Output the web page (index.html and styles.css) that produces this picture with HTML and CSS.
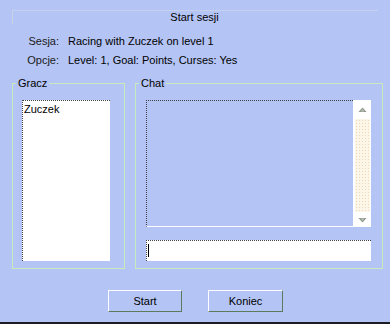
FILE: index.html
```html
<!DOCTYPE html>
<html lang="pl">
<head>
    <meta charset="UTF-8">
    <title>Start sesji</title>
    <link rel="stylesheet" href="styles.css">
</head>
<body>
    <div class="window">
        <div class="title">Start sesji</div>

        <div class="info">
            <span class="info-label">Sesja:</span>
            <span class="info-value">Racing with Zuczek on level 1</span>
            <span class="info-label">Opcje:</span>
            <span class="info-value">Level: 1, Goal: Points, Curses: Yes</span>
        </div>

        <div class="panels">
            <fieldset class="group group-players">
                <legend>Gracz</legend>
                <div class="group-body">
                    <div class="player-list">
                        <div class="player">Zuczek</div>
                    </div>
                </div>
            </fieldset>

            <fieldset class="group group-chat">
                <legend>Chat</legend>
                <div class="group-body">
                    <div class="chat-log">
                        <div class="chat-text"></div>
                        <div class="scrollbar">
                            <svg class="arrow" width="9" height="6" viewBox="0 0 9 6">
                                <path d="M4.5 0.5 L8.5 5 L0.5 5 Z" fill="#8c948c"/>
                                <path d="M4.5 2 L6.5 4.5 L2.5 4.5 Z" fill="#b8c4b0"/>
                            </svg>
                            <div class="track"></div>
                            <svg class="arrow" width="9" height="6" viewBox="0 0 9 6">
                                <path d="M0.5 1 L8.5 1 L4.5 5.5 Z" fill="#8c948c"/>
                                <path d="M2.5 1.5 L6.5 1.5 L4.5 4 Z" fill="#b8c4b0"/>
                            </svg>
                        </div>
                    </div>
                    <div class="chat-input">
                        <span class="caret"></span>
                    </div>
                </div>
            </fieldset>
        </div>

        <div class="buttons">
            <button class="btn btn-start">Start</button>
            <button class="btn btn-end">Koniec</button>
        </div>
    </div>
</body>
</html>
```

FILE: styles.css
```css
body {
    margin: 0;
    font-family: 'Liberation Sans', Arial, sans-serif;
    font-size: 11px;
    color: #000;
    background-color: #b4c4f4;
}
.window {
    width: 390px;
    height: 322px;
    background-color: #b4c4f4;
    border-bottom: 2px solid #1c1c24;
    overflow: hidden;
}
.title {
    margin: 10px 12px 0 12px;
    border-top: 1px solid #c4d0ec;
    border-left: 1px solid #c8d2e4;
    height: 13px;
    line-height: 13px;
    text-align: center;
    padding-right: 2px;
}
.info {
    display: grid;
    grid-template-columns: 47px auto;
    column-gap: 9px;
    margin: 8px 0 0 12px;
    line-height: 19px;
}
.info-label {
    text-align: right;
    color: #1a1a1a;
}
.panels {
    display: flex;
    gap: 10px;
    margin: 7px 0 0 12px;
}
.group {
    margin: 0;
    padding: 0;
    min-width: 0;
    border: 1px solid #c6ecbc;
}
.group legend {
    margin-left: 3px;
    padding: 0 2px;
    line-height: 12px;
}
.group-players {
    width: 111px;
}
.group-chat {
    width: 246px;
}
.group-body {
    padding: 11px 0 7px 9px;
}
.group-chat .group-body {
    padding-left: 10px;
    padding-right: 11px;
}
.player-list {
    width: 88px;
    height: 161px;
    box-sizing: border-box;
    background-color: #fff;
    border-top: 1px dotted #404040;
    border-left: 1px dotted #404040;
    padding: 1px 0 0 1px;
    line-height: 14px;
}
.chat-log {
    display: flex;
    height: 127px;
    box-sizing: border-box;
    border-top: 1px dotted #404040;
    border-left: 1px dotted #404040;
    border-bottom: 1px solid #fff;
}
.chat-text {
    flex: 1;
}
.scrollbar {
    width: 18px;
    margin-top: -1px;
    background-color: #fff;
    display: flex;
    flex-direction: column;
    align-items: center;
    padding: 7px 0 3px;
    box-sizing: border-box;
}
.scrollbar .arrow {
    display: block;
    flex: none;
}
.track {
    flex: 1;
    width: 15px;
    margin: 6px 0 5px;
    background-color: #fcf6e8;
    background-image: radial-gradient(#f0d8b8 0.6px, transparent 0.8px);
    background-size: 3px 3px;
}
.chat-input {
    margin-top: 13px;
    height: 21px;
    box-sizing: border-box;
    background-color: #fff;
    border-top: 1px dotted #404040;
    border-left: 1px dotted #404040;
    padding: 3px 0 0 1px;
}
.caret {
    display: block;
    width: 1px;
    height: 13px;
    background-color: #000;
}
.buttons {
    display: flex;
    justify-content: center;
    gap: 26px;
    margin-top: 21px;
    padding-left: 1px;
}
.btn {
    height: 22px;
    padding: 0;
    font-family: inherit;
    font-size: 11px;
    color: #000;
    background-color: #b4c4f4;
    border-top: 1px solid #fff;
    border-left: 1px solid #fff;
    border-right: 1px solid #5c7a5c;
    border-bottom: 1px solid #5c7a5c;
}
.btn-start {
    width: 74px;
}
.btn-end {
    width: 75px;
}
```
